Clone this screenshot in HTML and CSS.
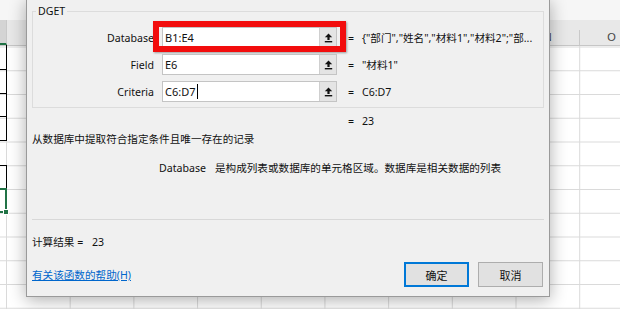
FILE: index.html
```html
<!DOCTYPE html>
<html lang="zh-CN">
<head>
    <meta charset="UTF-8">
    <title>函数参数 - DGET</title>
    <link rel="stylesheet" href="styles.css">
</head>
<body>
    <!-- 背景表格 -->
    <div class="sheet">
        <div class="bar"></div>
        <div class="heads">
            <div class="head part"></div>
            <div class="head">F</div>
            <div class="head">G</div>
            <div class="head">H</div>
            <div class="head">I</div>
            <div class="head">J</div>
            <div class="head">K</div>
            <div class="head">L</div>
            <div class="head">M</div>
            <div class="head">N</div>
            <div class="head">O</div>
        </div>
        <div class="grid"></div>
    </div>
    <div class="range range-a">
        <div></div><div></div><div></div><div></div>
    </div>
    <div class="range range-b">
        <div class="blk"></div>
        <div class="grn"><i class="handle"></i></div>
    </div>

    <!-- 函数参数对话框 -->
    <div class="dialog">
        <fieldset class="args">
            <legend>DGET</legend>
            <div class="arg-grid">
                <label>Database</label>
                <div class="ref">
                    <span class="ref-text">B1:E4</span>
                    <span class="ref-btn"><svg width="9" height="10" viewBox="0 0 9 10"><path d="M4.5 0.5 L8.2 4.3 H5.6 V7 H3.4 V4.3 H0.8 Z" fill="#111"/><rect x="0.8" y="8" width="7.4" height="1.4" fill="#111"/></svg></span>
                    <span class="mark"></span>
                </div>
                <span class="eq">=</span>
                <span class="val">{"部门","姓名","材料1","材料2";"部...</span>

                <label>Field</label>
                <div class="ref">
                    <span class="ref-text">E6</span>
                    <span class="ref-btn"><svg width="9" height="10" viewBox="0 0 9 10"><path d="M4.5 0.5 L8.2 4.3 H5.6 V7 H3.4 V4.3 H0.8 Z" fill="#111"/><rect x="0.8" y="8" width="7.4" height="1.4" fill="#111"/></svg></span>
                </div>
                <span class="eq">=</span>
                <span class="val">"材料1"</span>

                <label>Criteria</label>
                <div class="ref">
                    <span class="ref-text">C6:D7<span class="caret"></span></span>
                    <span class="ref-btn"><svg width="9" height="10" viewBox="0 0 9 10"><path d="M4.5 0.5 L8.2 4.3 H5.6 V7 H3.4 V4.3 H0.8 Z" fill="#111"/><rect x="0.8" y="8" width="7.4" height="1.4" fill="#111"/></svg></span>
                </div>
                <span class="eq">=</span>
                <span class="val">C6:D7</span>
            </div>
        </fieldset>

        <div class="arg-grid total">
            <span></span><span></span>
            <span class="eq">=</span>
            <span class="val">23</span>
        </div>

        <p class="desc">从数据库中提取符合指定条件且唯一存在的记录</p>
        <p class="arg-help"><span class="name">Database</span><span>是构成列表或数据库的单元格区域。数据库是相关数据的列表</span></p>

        <div class="sep"></div>

        <p class="result">计算结果 = <span class="num">23</span></p>

        <div class="foot">
            <a href="#" class="help">有关该函数的帮助(H)</a>
            <button class="btn ok">确定</button>
            <button class="btn">取消</button>
        </div>
    </div>
</body>
</html>
```

FILE: styles.css
```css
*{
    margin: 0;
    padding: 0;
    box-sizing: border-box;
}
body{
    width: 620px;
    height: 309px;
    overflow: hidden;
    position: relative;
    font-family: "Noto Sans", "Noto Sans CJK SC", sans-serif;
    font-size: 10.6px;
    color: #111;
    background: #fff;
}

/* 表格背景 */
.sheet{
    height: 309px;
    display: flex;
    flex-direction: column;
}
.sheet .bar{
    height: 20px;
    background: #f6f6f6;
}
.sheet .heads{
    display: flex;
    height: 26px;
    padding-top: 10px;
    background: #e8e8e8;
    border-bottom: 1px solid #c6c6c6;
}
.sheet .head{
    flex: none;
    width: 63.7px;
    height: 15px;
    border-right: 1px solid #c9c9c9;
    text-align: center;
    line-height: 15px;
    font-family: "Liberation Sans", sans-serif;
    font-size: 11px;
    color: #444;
}
.sheet .head.part{
    width: 7px;
    margin-top: -10px;
    height: 25px;
    background: #d4d4d4;
    border-bottom: 2px solid #217346;
    border-right: 1px solid #c9c9c9;
}
.sheet .grid{
    flex: 1;
    background-image:
        linear-gradient(to right, #dadada 1px, transparent 1px),
        linear-gradient(to bottom, #dadada 1px, transparent 1px);
    background-size: 63.7px 23.75px;
    background-position: 6px 0, 0 0.5px;
}

/* 选区 */
.range{
    position: absolute;
    left: -2px;
    width: 9px;
}
.range-a{
    top: 45px;
    border-right: 1px solid #000;
}
.range-a div{
    height: 24px;
    border-bottom: 1px solid #000;
}
.range-a div:first-child{
    height: 25px;
}
.range-a div:nth-child(3){
    height: 23px;
}
.range-b{
    top: 165px;
}
.range-b .blk{
    height: 24px;
    border-top: 1px solid #000;
    border-right: 1px solid #000;
}
.range-b .grn{
    position: relative;
    height: 25px;
    border: 2px solid #217346;
    border-left: none;
    margin-top: -1px;
}
.range-b .handle{
    position: absolute;
    right: -4px;
    bottom: -4px;
    width: 6px;
    height: 6px;
    background: #217346;
    border: 1px solid #fff;
}

/* 对话框 */
.dialog{
    position: absolute;
    left: 26px;
    top: -1px;
    width: 524px;
    padding: 4px 5px 9px;
    background: #f0f0f0;
    border: 1px solid #9a9a9a;
    box-shadow: 0 3px 16px rgba(0, 0, 0, .32);
}
.args{
    border: 1px solid #dcdcdc;
    padding: 9px 0 5px;
}
.args legend{
    margin-left: 3px;
    padding: 0 2px;
    line-height: 14px;
}
.arg-grid{
    display: grid;
    grid-template-columns: 129px 175px 25px 1fr;
    grid-auto-rows: 21px;
    row-gap: 6px;
    align-items: center;
}
.arg-grid label{
    text-align: right;
    padding-right: 8px;
}
.ref{
    position: relative;
    display: flex;
    height: 21px;
    background: #fff;
    border: 1px solid #c4c4c4;
}
.ref-text{
    flex: 1;
    display: flex;
    align-items: center;
    padding-left: 2px;
    font-size: 11px;
}
.caret{
    display: inline-block;
    width: 1px;
    height: 15px;
    margin-left: 1px;
    background: #000;
}
.ref-btn{
    width: 17px;
    display: flex;
    align-items: center;
    justify-content: center;
    background: #e4e4e4;
    border-left: 1px solid #cfcfcf;
}
.ref .mark{
    position: absolute;
    left: -10px;
    top: -7px;
    right: -10px;
    bottom: -5px;
    border: 6px solid #f20d0d;
    box-shadow: 1px 1px 2px rgba(0, 0, 0, .35);
}
.eq{
    padding-left: 11px;
}
.val{
    white-space: nowrap;
}
.total{
    margin-top: 5px;
    padding-left: 1px;
    grid-auto-rows: 16px;
}
.desc{
    margin-top: 2px;
    line-height: 16px;
}
.arg-help{
    display: flex;
    margin-top: 13px;
    padding-left: 127px;
    line-height: 16px;
}
.arg-help .name{
    width: 56px;
}
.sep{
    margin-top: 43px;
    height: 1px;
    background: #d8d8d8;
}
.result{
    margin-top: 14px;
    line-height: 16px;
}
.result .num{
    margin-left: 6px;
}
.foot{
    display: flex;
    align-items: center;
    gap: 9px;
    margin-top: 12px;
    padding-right: 1px;
}
.help{
    margin-right: auto;
    color: #0066cc;
    text-decoration: underline;
}
.btn{
    width: 65px;
    height: 25px;
    font-family: inherit;
    font-size: 11px;
    color: #111;
    background: #e1e1e1;
    border: 1px solid #adadad;
}
.btn.ok{
    border: 2px solid #0078d7;
}
```
